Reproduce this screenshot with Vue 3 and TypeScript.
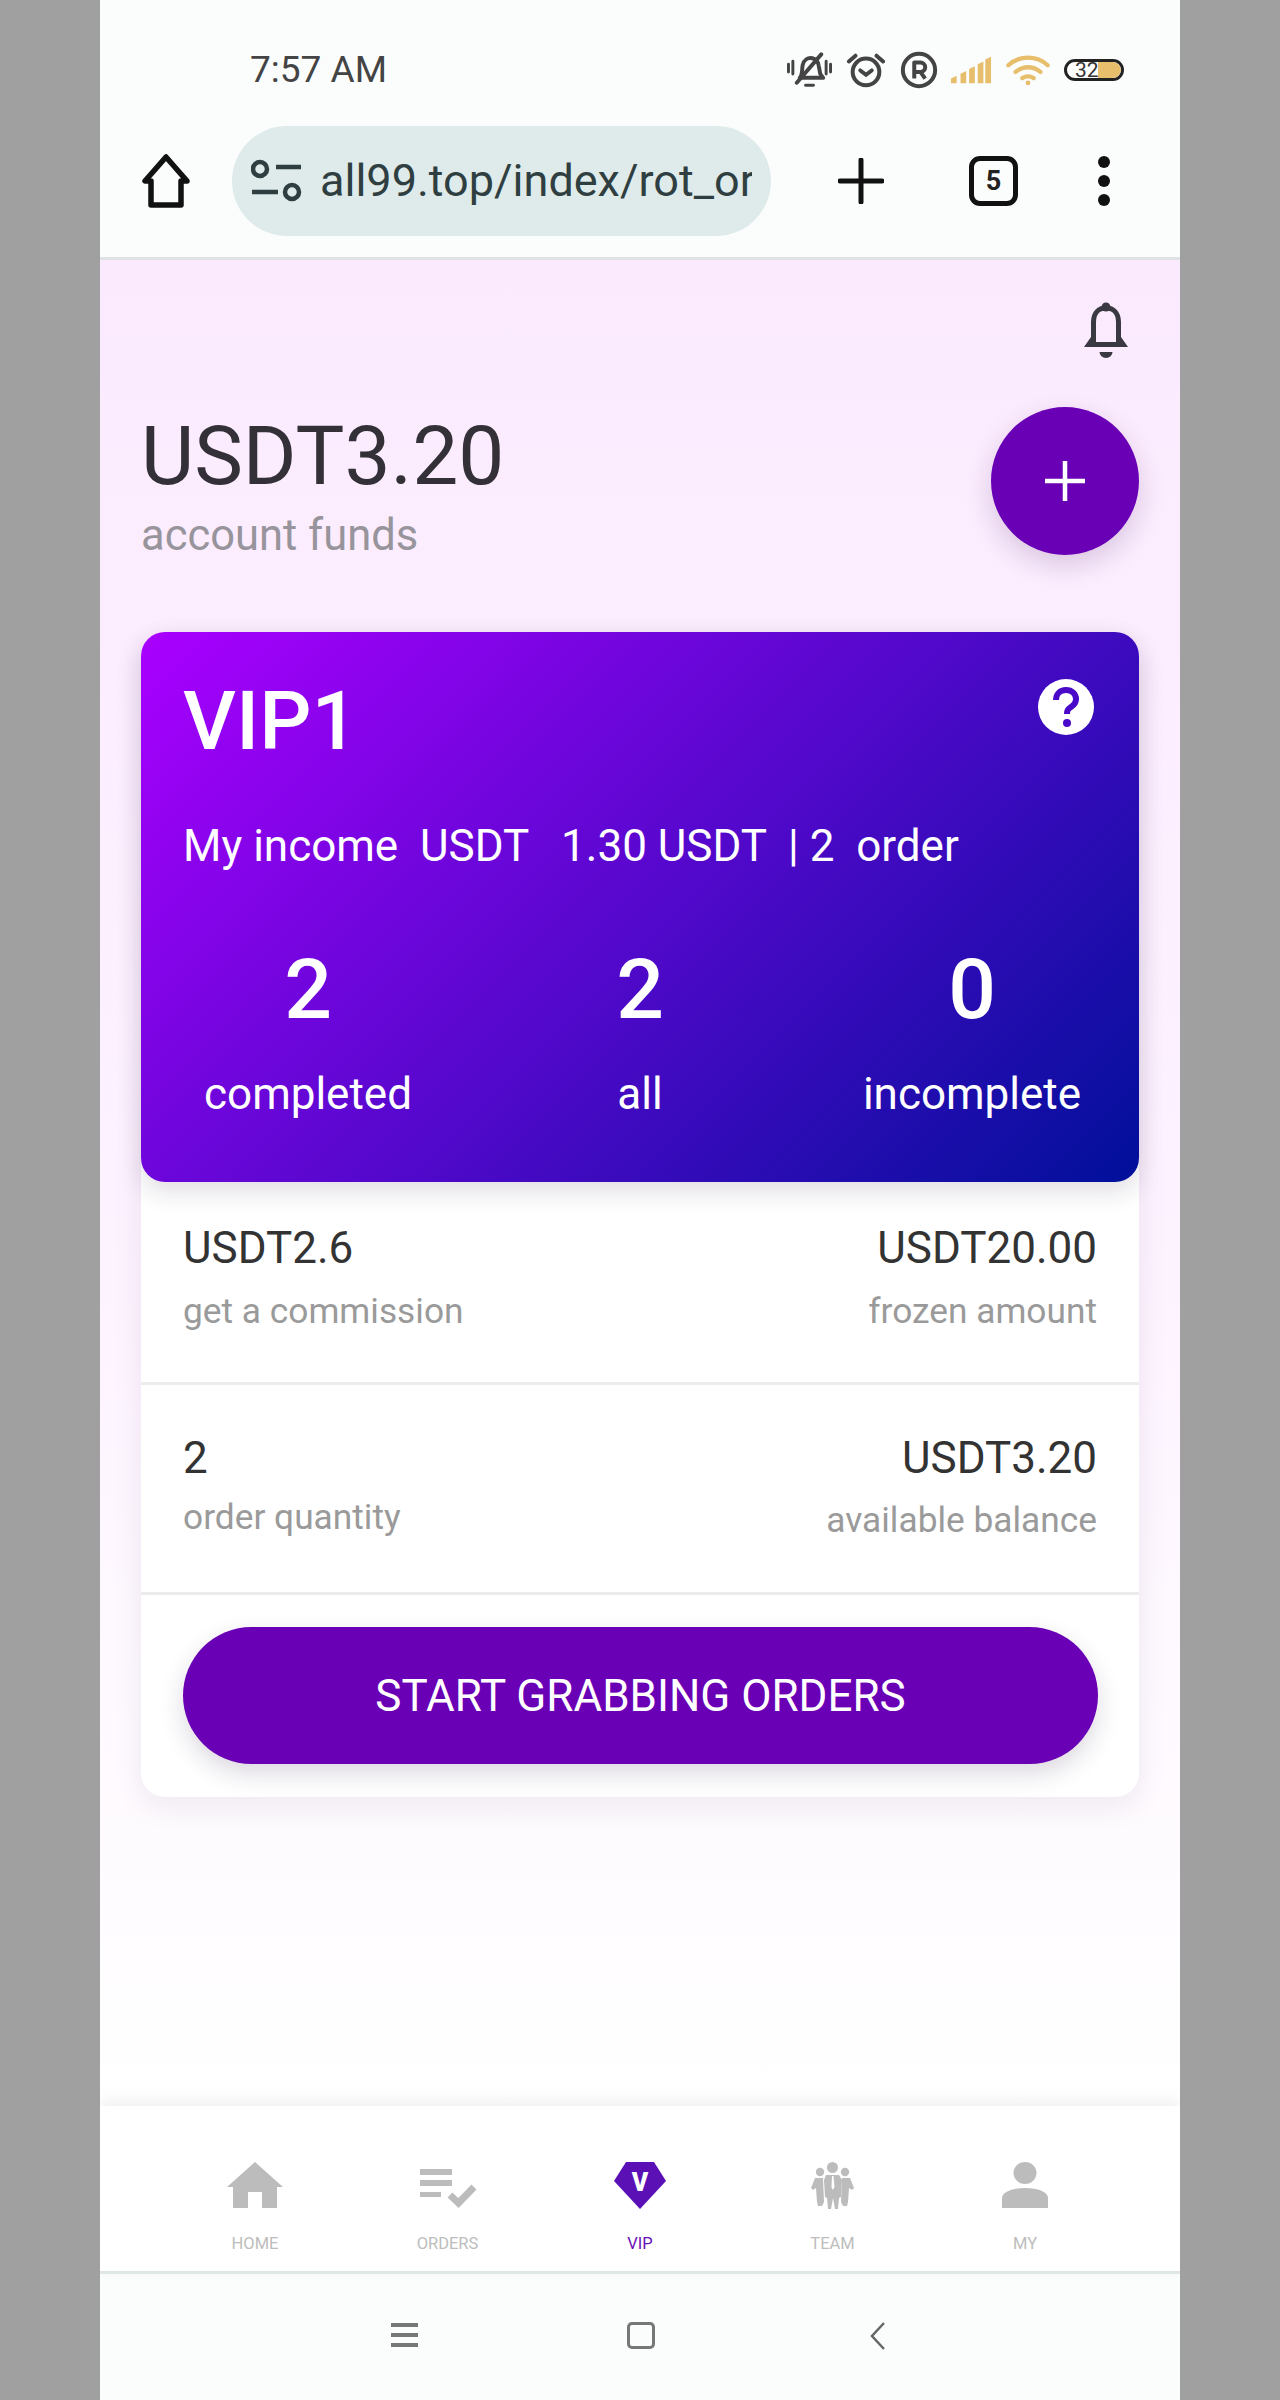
<script setup lang="ts">
const stats: { value: string; label: string }[] = [
  { value: '2', label: 'completed' },
  { value: '2', label: 'all' },
  { value: '0', label: 'incomplete' },
]
const navItems: { key: string; label: string; active?: boolean }[] = [
  { key: 'home', label: 'HOME' },
  { key: 'orders', label: 'ORDERS' },
  { key: 'vip', label: 'VIP', active: true },
  { key: 'team', label: 'TEAM' },
  { key: 'my', label: 'MY' },
]
</script>

<template>
  <div class="phone">
    <header class="chrome">
      <div class="status">
        <span class="time">7:57 AM</span>
        <div class="status-icons">
          <svg width="45" height="36" viewBox="0 0 46 36" fill="none" stroke="#444" stroke-width="4" stroke-linecap="round" stroke-linejoin="round">
            <path d="M1.500 12v8M6 9v13M40 9v13M44.500 12v8" stroke-width="3"/>
            <path d="M13 26c3-3 2-7 3-13 1-5 5-8 10-7 4 1 6 4 6.500 8l1.500 8 3 4z"/>
            <path d="M10 31 35 2" stroke-width="4"/>
            <path d="M19 33.500h8" stroke-width="3"/>
          </svg>
          <svg width="40" height="36" viewBox="0 0 42 36" fill="none" stroke="#444" stroke-width="4.200" stroke-linecap="round">
            <circle cx="21" cy="20" r="14"/>
            <path d="M15 18.500l6 4.500 6-4.500"/>
            <path d="M3 9l7-6M39 9l-7-6"/>
          </svg>
          <svg width="38" height="38" viewBox="0 0 40 40" fill="none" stroke="#444" stroke-width="4.200">
            <circle cx="20" cy="20" r="17"/>
            <path d="M15 29V12h6.500a5 5 0 0 1 0 10H15M21.500 22l5 7" stroke-linejoin="round"/>
          </svg>
          <svg class="i-signal" width="42" height="28" viewBox="0 0 44 28" fill="#e7bf6c">
            <path d="M1 23l6-3v8H1zM11 18l6-3v13h-6zM20 13l6-3v18h-6zM29 8l6-3v23h-6zM37 3l6-3v28h-6z"/>
          </svg>
          <svg width="44" height="31" viewBox="0 0 46 32" fill="none" stroke="#e7bf6c" stroke-width="4.500" stroke-linecap="round">
            <path d="M2.500 10.500C14 0 32 0 43.500 10.500"/>
            <path d="M10 17.500c8-6.500 18-6.500 26 0"/>
            <path d="M17 24c4-2.500 8-2.500 12 0"/>
            <circle cx="23" cy="29" r="2.500" fill="#e7bf6c" stroke="none"/>
          </svg>
          <div class="battery"><span class="bat-fill"></span><span class="bat-num">32</span></div>
        </div>
      </div>
      <div class="toolbar">
        <svg class="tb-home" width="52" height="54" viewBox="0 0 52 54" fill="none" stroke="#111" stroke-width="5.500" stroke-linejoin="round">
          <path d="M26 3 5 27h6v24h30V27h6z"/>
        </svg>
        <div class="url-pill">
          <svg width="52" height="44" viewBox="0 0 52 44" fill="none" stroke="#2f3f41" stroke-width="4.500">
            <circle cx="9" cy="10" r="7"/>
            <path d="M25 8h25M1 33h26"/>
            <circle cx="41" cy="33" r="7"/>
          </svg>
          <span class="url-clip"><span class="url">all99.top/index/rot_orders</span></span>
        </div>
        <svg class="tb-plus" width="46" height="46" viewBox="0 0 46 46" stroke="#111" stroke-width="5" stroke-linecap="round">
          <path d="M23 2v42M2 23h42"/>
        </svg>
        <div class="tabs">5</div>
        <div class="dots"><i></i><i></i><i></i></div>
      </div>
    </header>

    <main class="page">
      <div class="bell-row">
        <svg width="44" height="56" viewBox="0 0 44 56" fill="none" stroke="#3a3840" stroke-width="5">
          <path d="M9.500 42V20c0-9 5-14 12.500-14s12.500 5 12.500 14v22"/>
          <circle cx="22" cy="5" r="4.500" fill="#3a3840" stroke="none"/>
          <path d="M7 35 0 45h44l-7-10-2 5H9z" fill="#3a3840" stroke="none"/>
          <path d="M15.500 50h13a6.500 6 0 0 1-13 0z" fill="#3a3840" stroke="none"/>
        </svg>
      </div>

      <section class="funds">
        <div>
          <div class="funds-value">USDT3.20</div>
          <div class="funds-label">account funds</div>
        </div>
        <button class="fab" aria-label="add">
          <svg width="42" height="42" viewBox="0 0 42 42" stroke="#fff" stroke-width="4.500">
            <path d="M21 1v40M1 21h40"/>
          </svg>
        </button>
      </section>

      <section class="panel">
        <div class="vip">
          <div class="vip-top">
            <span class="vip-name">VIP1</span>
            <svg width="56" height="56" viewBox="0 0 56 56">
              <circle cx="28" cy="28" r="28" fill="#fff"/>
              <path d="M18 21c0-6 4-10 10-10s10 4 10 9c0 4-2 6-5 8-3 2-4 3-4 7" fill="none" stroke="#4a08c8" stroke-width="6"/>
              <circle cx="29" cy="44" r="4" fill="#4a08c8"/>
            </svg>
          </div>
          <div class="income">My income&nbsp; USDT &nbsp; 1.30 USDT &nbsp;| 2&nbsp; order</div>
          <div class="stats">
            <div v-for="s in stats" :key="s.label" class="stat">
              <div class="stat-value">{{ s.value }}</div>
              <div class="stat-label">{{ s.label }}</div>
            </div>
          </div>
        </div>

        <div class="row row-a">
          <div>
            <div class="val">USDT2.6</div>
            <div class="lab">get a commission</div>
          </div>
          <div class="right">
            <div class="val">USDT20.00</div>
            <div class="lab">frozen amount</div>
          </div>
        </div>
        <div class="row row-b">
          <div>
            <div class="val">2</div>
            <div class="lab">order quantity</div>
          </div>
          <div class="right">
            <div class="val">USDT3.20</div>
            <div class="lab lab-low">available balance</div>
          </div>
        </div>
        <div class="action">
          <button class="grab">START GRABBING ORDERS</button>
        </div>
      </section>
    </main>

    <nav class="tabbar">
      <div v-for="n in navItems" :key="n.key" class="nav-item" :class="{ active: n.active }">
        <div class="nav-icon">
          <svg v-if="n.key === 'home'" width="56" height="46" viewBox="0 0 56 46" fill="#bcbcbc">
            <path d="M28 0 56 25h-6v21H35V30H21v16H6V25H0z"/>
          </svg>
          <svg v-else-if="n.key === 'orders'" width="58" height="46" viewBox="0 0 58 46">
            <path d="M1 7h32v6H1zM1 18h32v6H1zM1 30h21v5H1z" fill="#bcbcbc"/>
            <path d="M31 33l8.500 8L55 25" fill="none" stroke="#bcbcbc" stroke-width="7"/>
          </svg>
          <svg v-else-if="n.key === 'vip'" width="52" height="47" viewBox="0 0 52 47">
            <path d="M12 0h28l12 19-26 28L0 19z" fill="#5a10b5"/>
            <text x="26" y="29" text-anchor="middle" font-family="Roboto" font-weight="900" font-size="25" fill="#fff">V</text>
          </svg>
          <svg v-else-if="n.key === 'team'" width="43" height="47" viewBox="0 0 43 47" fill="#bcbcbc">
            <circle cx="9" cy="10" r="4.200"/>
            <circle cx="34" cy="10" r="4.200"/>
            <circle cx="21.500" cy="5.500" r="5.500"/>
            <path d="M4 16h8l1 24-2 4H7l-1-4-1-14-3 2-2-2z"/>
            <path d="M39 16h-8l-1 24 2 4h4l1-4 1-14 3 2 2-2z"/>
            <path d="M15 13h13l3 5-1 17-2 1-1 11h-3l-2-11-2 11h-3l-1-11-2-1-1-17z"/>
            <path d="M21 14h1.500l1 11-1.700 3-1.300-3z" fill="#fff"/>
          </svg>
          <svg v-else width="46" height="46" viewBox="0 0 46 46" fill="#bcbcbc">
            <ellipse cx="23" cy="11" rx="11.500" ry="11"/>
            <path d="M0 46V36c0-6 10-10 23-10s23 4 23 10v10z"/>
          </svg>
        </div>
        <span class="nav-label">{{ n.label }}</span>
      </div>
    </nav>

    <footer class="sysnav">
      <svg width="28" height="26" viewBox="0 0 28 26" fill="#777">
        <path d="M0 1h27v4H0zM0 11h27v4H0zM0 21h27v4H0z"/>
      </svg>
      <div class="sys-square"></div>
      <svg width="18" height="28" viewBox="0 0 18 28" fill="none" stroke="#666" stroke-width="2.500">
        <path d="M15 1 3 14l12 13"/>
      </svg>
    </footer>
  </div>
</template>

<style>
html, body { margin: 0; background: #a0a0a0; }
</style>

<style scoped>
.phone {
  width: 1080px;
  height: 2400px;
  margin-left: 100px;
  display: flex;
  flex-direction: column;
  font-family: Roboto, "Liberation Sans", sans-serif;
  background: #fff;
  overflow: hidden;
}
.chrome {
  height: 260px;
  box-sizing: border-box;
  background: #fbfdfd;
  border-bottom: 3px solid #dfe3e4;
  flex: none;
}
.status {
  height: 126px;
  box-sizing: border-box;
  padding: 50px 56px 0 150px;
  display: flex;
  justify-content: space-between;
  align-items: flex-start;
}
.time { font-size: 37px; line-height: 40px; color: #444; }
.status-icons { display: flex; align-items: center; height: 40px; gap: 14px; }
.i-signal { margin-left: -2px; }
.battery {
  position: relative;
  width: 60px;
  height: 22px;
  box-sizing: border-box;
  border: 3px solid #222;
  border-radius: 11px;
  overflow: hidden;
  background: #fff;
}
.bat-fill { position: absolute; right: 0; top: 0; bottom: 0; width: 23px; background: #e7bf6c; border-radius: 0 9px 9px 0; }
.bat-num { position: absolute; left: 8px; top: -2px; font-size: 21px; line-height: 20px; color: #333; }
.toolbar { height: 110px; display: flex; align-items: center; position: relative; }
.tb-home { margin-left: 40px; flex: none; }
.url-pill {
  margin-left: 40px;
  width: 539px;
  height: 110px;
  flex: none;
  border-radius: 55px;
  background: #dfebea;
  display: flex;
  align-items: center;
  box-sizing: border-box;
  padding-left: 19px;
}
.url-clip { margin-left: 17px; width: 432px; overflow: hidden; white-space: nowrap; display: block; }
.url { font-size: 45px; line-height: 56px; color: #2f3f41; }
.tb-plus { margin-left: 67px; flex: none; }
.tabs {
  margin-left: 85px;
  width: 49px;
  height: 50px;
  flex: none;
  box-sizing: border-box;
  border: 5px solid #111;
  border-radius: 11px;
  font-size: 27px;
  font-weight: 700;
  line-height: 40px;
  text-align: center;
  color: #222;
}
.dots { margin-left: 80px; display: flex; flex-direction: column; gap: 7px; }
.dots i { display: block; width: 12px; height: 12px; border-radius: 50%; background: #111; }

.page {
  height: 1846px;
  flex: none;
  box-sizing: border-box;
  padding: 42px 41px 0;
  background: linear-gradient(180deg, #fbeafe 0%, #fdf3ff 55%, #ffffff 100%);
  position: relative;
}
.bell-row { display: flex; justify-content: flex-end; padding-right: 11px; height: 105px; }
.funds { display: flex; justify-content: space-between; height: 225px; }
.funds-value { font-size: 82px; line-height: 96px; color: #333038; margin-top: 1px; }
.funds-label { font-size: 43.500px; line-height: 46px; color: #98949c; margin-top: 9px; }
.fab {
  width: 148px;
  height: 148px;
  padding: 0;
  border: 0;
  border-radius: 50%;
  background: #6a00b5;
  display: flex;
  align-items: center;
  justify-content: center;
  box-shadow: 0 10px 26px rgba(60, 30, 90, 0.18);
}
.panel {
  background: #fff;
  border-radius: 24px;
  box-shadow: 0 10px 30px rgba(40, 20, 60, 0.08);
}
.vip {
  height: 550px;
  box-sizing: border-box;
  padding: 44px 42px 0;
  border-radius: 24px;
  color: #fff;
  background: linear-gradient(135deg, #aa00ff 0%, #00109a 100%);
  box-shadow: 0 10px 24px rgba(40, 20, 60, 0.14);
}
.vip-top { display: flex; justify-content: space-between; align-items: flex-start; padding-right: 3px; height: 120px; margin-top: 3px; }
.vip-name { font-size: 82px; line-height: 84px; font-weight: 500; }
.income { font-size: 44px; line-height: 50px; margin-top: 22px; white-space: nowrap; }
.stats { display: flex; justify-content: space-between; margin: 71px -21px 0 -21px; }
.stat { width: 334px; text-align: center; }
.stats .stat:first-child { width: 292px; }
.stats .stat:last-child { width: 292px; }
.stat-value { font-size: 84px; line-height: 96px; font-weight: 500; }
.stat-label { font-size: 44px; line-height: 52px; margin-top: 30px; }
.row { display: flex; justify-content: space-between; padding: 0 42px; box-sizing: border-box; border-bottom: 3px solid #ececee; }
.row-a { height: 203px; padding-top: 41px; }
.row-b { height: 210px; padding-top: 48px; }
.right { text-align: right; }
.val { font-size: 44px; line-height: 50px; color: #333; }
.lab { font-size: 35.300px; line-height: 40px; color: #9a9a9a; margin-top: 18px; }
.row-b .lab { margin-top: 14px; }
.row-b .lab-low { margin-top: 17px; }
.action { padding: 32px 41px 33px 42px; }
.grab {
  display: block;
  width: 100%;
  height: 137px;
  border: 0;
  border-radius: 69px;
  background: #6a00b5;
  color: #fff;
  font-family: inherit;
  font-size: 44px;
  box-shadow: 0 10px 24px rgba(40, 20, 60, 0.16);
}
.tabbar {
  height: 168px;
  box-sizing: border-box;
  flex: none;
  padding: 56px 59px 0;
  display: flex;
  justify-content: space-between;
  background: #fff;
  border-bottom: 3px solid #dfe7e7;
  box-shadow: 0 -6px 14px rgba(0, 0, 0, 0.06);
  position: relative;
}
.nav-item { width: 192px; display: flex; flex-direction: column; align-items: center; }
.nav-icon { height: 48px; display: flex; align-items: flex-start; justify-content: center; }
.nav-label { margin-top: 23px; font-size: 16.500px; line-height: 22px; color: #bdbdbd; }
.nav-item.active .nav-label { color: #6a10b5; }
.sysnav {
  flex: 1;
  background: #fbfdfd;
  display: flex;
  align-items: flex-start;
  padding: 48px 0 0 291px;
  box-sizing: border-box;
}
.sys-square { width: 28px; height: 27px; box-sizing: border-box; border: 3px solid #777; border-radius: 5px; margin-left: 208px; }
.sysnav svg:last-child { margin-left: 214px; }
</style>
